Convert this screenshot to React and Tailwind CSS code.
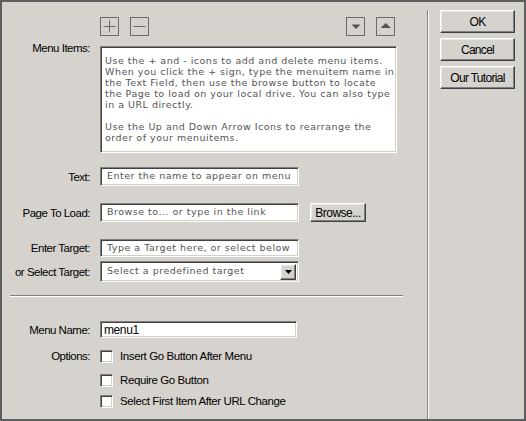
import React from "react";

const sunken =
  "bg-white border border-t-[#808080] border-l-[#808080] border-b-white border-r-white shadow-[inset_1px_1px_0_#404040,inset_-1px_-1px_0_#d4d0c8]";
const raised =
  "bg-[#d6d3ce] border border-t-white border-l-white border-b-[#404040] border-r-[#404040] shadow-[inset_-1px_-1px_0_#808080,inset_1px_1px_0_#e8e8e8]";
const sans = "font-['Liberation_Sans',Arial,sans-serif]";
const pixel = "font-['DejaVu_Sans',sans-serif] text-[9.5px] tracking-[0.5px] text-[#555]";

function Label({ children, className = "" }) {
  return (
    <div className={`w-[88px] shrink-0 text-right text-[11.5px] tracking-[-0.5px] text-black leading-[14px] whitespace-nowrap ${sans} ${className}`}>
      {children}
    </div>
  );
}

function IconBox({ children }) {
  return (
    <svg width="19" height="19" viewBox="0 0 19 19" className="block">
      <rect x="0.5" y="0.5" width="18" height="18" fill="none" stroke="#6b6b6b" />
      {children}
    </svg>
  );
}

function Check({ label }) {
  return (
    <div className="flex items-center">
      <div className={`w-[13px] h-[13px] ${sunken}`} />
      <span className={`ml-[7px] text-[11.5px] tracking-[-0.4px] leading-[14px] text-black ${sans}`}>{label}</span>
    </div>
  );
}

export default function App() {
  return (
    <div className="w-[526px] h-[421px] border-2 border-[#5f5f5f] bg-[#d6d3ce] flex">
      {/* form column */}
      <div className="w-[425px] shrink-0 flex flex-col">
        {/* icon row */}
        <div className="mt-[15px] h-[19px] flex">
          <div className="ml-[98px]">
            <IconBox>
              <line x1="3.5" y1="9.5" x2="15.5" y2="9.5" stroke="#6b6b6b" />
              <line x1="9.5" y1="3.5" x2="9.5" y2="15.5" stroke="#6b6b6b" />
            </IconBox>
          </div>
          <div className="ml-[11px]">
            <IconBox>
              <line x1="3.5" y1="9.5" x2="15.5" y2="9.5" stroke="#6b6b6b" />
            </IconBox>
          </div>
          <div className="ml-[197px]">
            <IconBox>
              <polygon points="5.5,7.5 14.5,7.5 10,12" fill="#555" />
            </IconBox>
          </div>
          <div className="ml-[11px]">
            <IconBox>
              <polygon points="4.5,11 15,11 9.75,6" fill="#555" />
            </IconBox>
          </div>
        </div>

        {/* menu items */}
        <div className="mt-[10px] flex items-start">
          <Label className="-mt-[5px]">Menu Items:</Label>
          <div className={`ml-[10px] w-[297px] h-[107px] pt-[8px] pl-[4px] leading-[11px] whitespace-nowrap overflow-hidden ${sunken} ${pixel}`}>
            Use the + and - icons to add and delete menu items.
            <br />
            When you click the + sign, type the menuitem name in
            <br />
            the Text Field, then use the browse button to locate
            <br />
            the Page to load on your local drive. You can also type
            <br />
            in a URL directly.
            <br />
            <br />
            Use the Up and Down Arrow Icons to rearrange the
            <br />
            order of your menuitems.
          </div>
        </div>

        {/* text */}
        <div className="mt-[14px] flex items-center">
          <Label>Text:</Label>
          <div className={`ml-[10px] w-[199px] h-[19px] pl-[6px] flex items-center whitespace-nowrap overflow-hidden ${sunken} ${pixel}`}>
            Enter the name to appear on menu
          </div>
        </div>

        {/* page to load */}
        <div className="mt-[17px] flex items-center">
          <Label>Page To Load:</Label>
          <div className={`ml-[10px] w-[199px] h-[19px] pl-[6px] flex items-center whitespace-nowrap ${sunken} ${pixel} tracking-[-0.5px]`}>
            Browse to... or type in the link
          </div>
          <button className={`ml-[11px] w-[56px] h-[19px] text-[12px] tracking-[-0.5px] leading-none text-black ${sans} ${raised}`}>
            Browse...
          </button>
        </div>

        {/* enter target */}
        <div className="mt-[17px] flex items-center">
          <Label>Enter Target:</Label>
          <div className={`ml-[10px] w-[199px] h-[18px] pl-[6px] flex items-center whitespace-nowrap overflow-hidden ${sunken} ${pixel}`}>
            Type a Target here, or select below
          </div>
        </div>

        {/* select target */}
        <div className="mt-[4px] flex items-center">
          <Label>or Select Target:</Label>
          <div className={`ml-[10px] w-[199px] h-[21px] pl-[6px] pr-[2px] flex items-center justify-between ${sunken} ${pixel}`}>
            <span>Select a predefined target</span>
            <div className={`w-[16px] h-[16px] flex items-center justify-center ${raised}`}>
              <svg width="7" height="4" viewBox="0 0 7 4">
                <polygon points="0,0 7,0 3.5,4" fill="#000" />
              </svg>
            </div>
          </div>
        </div>

        {/* separator */}
        <div className="mt-[13px] ml-[8px] w-[393px] h-[2px] border-t border-t-[#808080] border-b border-b-white" />

        {/* menu name */}
        <div className="mt-[24px] flex items-center">
          <Label>Menu Name:</Label>
          <div className={`ml-[10px] w-[197px] h-[17px] pl-[3px] flex items-center text-[12px] tracking-[-0.4px] text-black ${sans} ${sunken}`}>
            menu1
          </div>
        </div>

        {/* options */}
        <div className="mt-[11px] flex items-center">
          <Label>Options:</Label>
          <div className="ml-[10px]">
            <Check label="Insert Go Button After Menu" />
          </div>
        </div>
        <div className="mt-[10px] ml-[98px]">
          <Check label="Require Go Button" />
        </div>
        <div className="mt-[7px] ml-[98px]">
          <Check label="Select First Item After URL Change" />
        </div>
      </div>

      {/* vertical separator */}
      <div className="mt-[8px] w-[2px] border-l border-l-[#808080] border-r border-r-white" />

      {/* buttons */}
      <div className="pl-[11px] pt-[8px] flex flex-col gap-[5px]">
        {["OK", "Cancel", "Our Tutorial"].map((t) => (
          <button key={t} className={`w-[75px] h-[23px] text-[12px] tracking-[-0.7px] leading-none text-black ${sans} ${raised}`}>
            {t}
          </button>
        ))}
      </div>
    </div>
  );
}
